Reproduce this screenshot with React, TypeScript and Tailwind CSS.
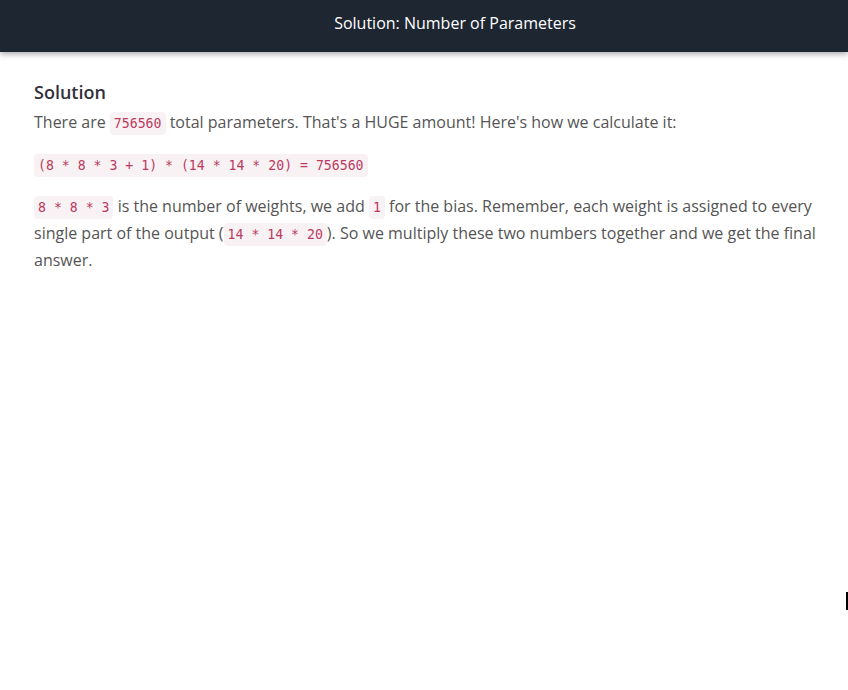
import React from "react";

const Code = ({ children }: { children: React.ReactNode }) => (
  <code className="rounded-[4px] bg-[#f9f2f4] px-[4px] py-[4px] text-[13.2px] leading-none text-[#bb3a5f] [font-family:'DejaVu_Sans_Mono',monospace]">
    {children}
  </code>
);

export default function App() {
  return (
    <div className="relative min-h-[690px] bg-white [font-family:'Open_Sans',sans-serif]">
      <header className="flex h-[52px] items-center justify-center bg-[#1e2731] pb-[6px] pl-[62px] shadow-[0_2px_6px_rgba(0,0,0,0.35)]">
        <h1 className="text-[16px] text-white">Solution: Number of Parameters</h1>
      </header>
      <main className="pl-[34px] pr-[26px] pt-[28px] text-[16px] leading-[27px] text-[#555]">
        <h2 className="mb-[5px] text-[18px] font-semibold leading-[24px] text-[#33313b]">Solution</h2>
        <p className="mb-[15px]">
          There are <Code>756560</Code> total parameters. That's a HUGE amount! Here's how we calculate it:
        </p>
        <p className="mb-[15px]">
          <Code>(8 * 8 * 3 + 1) * (14 * 14 * 20) = 756560</Code>
        </p>
        <p>
          <Code>8 * 8 * 3</Code> is the number of weights, we add <Code>1</Code> for the bias. Remember, each weight is
          assigned to every single part of the output (<Code>14 * 14 * 20</Code>). So we multiply these two numbers
          together and we get the final answer.
        </p>
      </main>
      <div className="absolute left-[846px] top-[592px] h-[18px] w-[2px] bg-black" />
    </div>
  );
}
